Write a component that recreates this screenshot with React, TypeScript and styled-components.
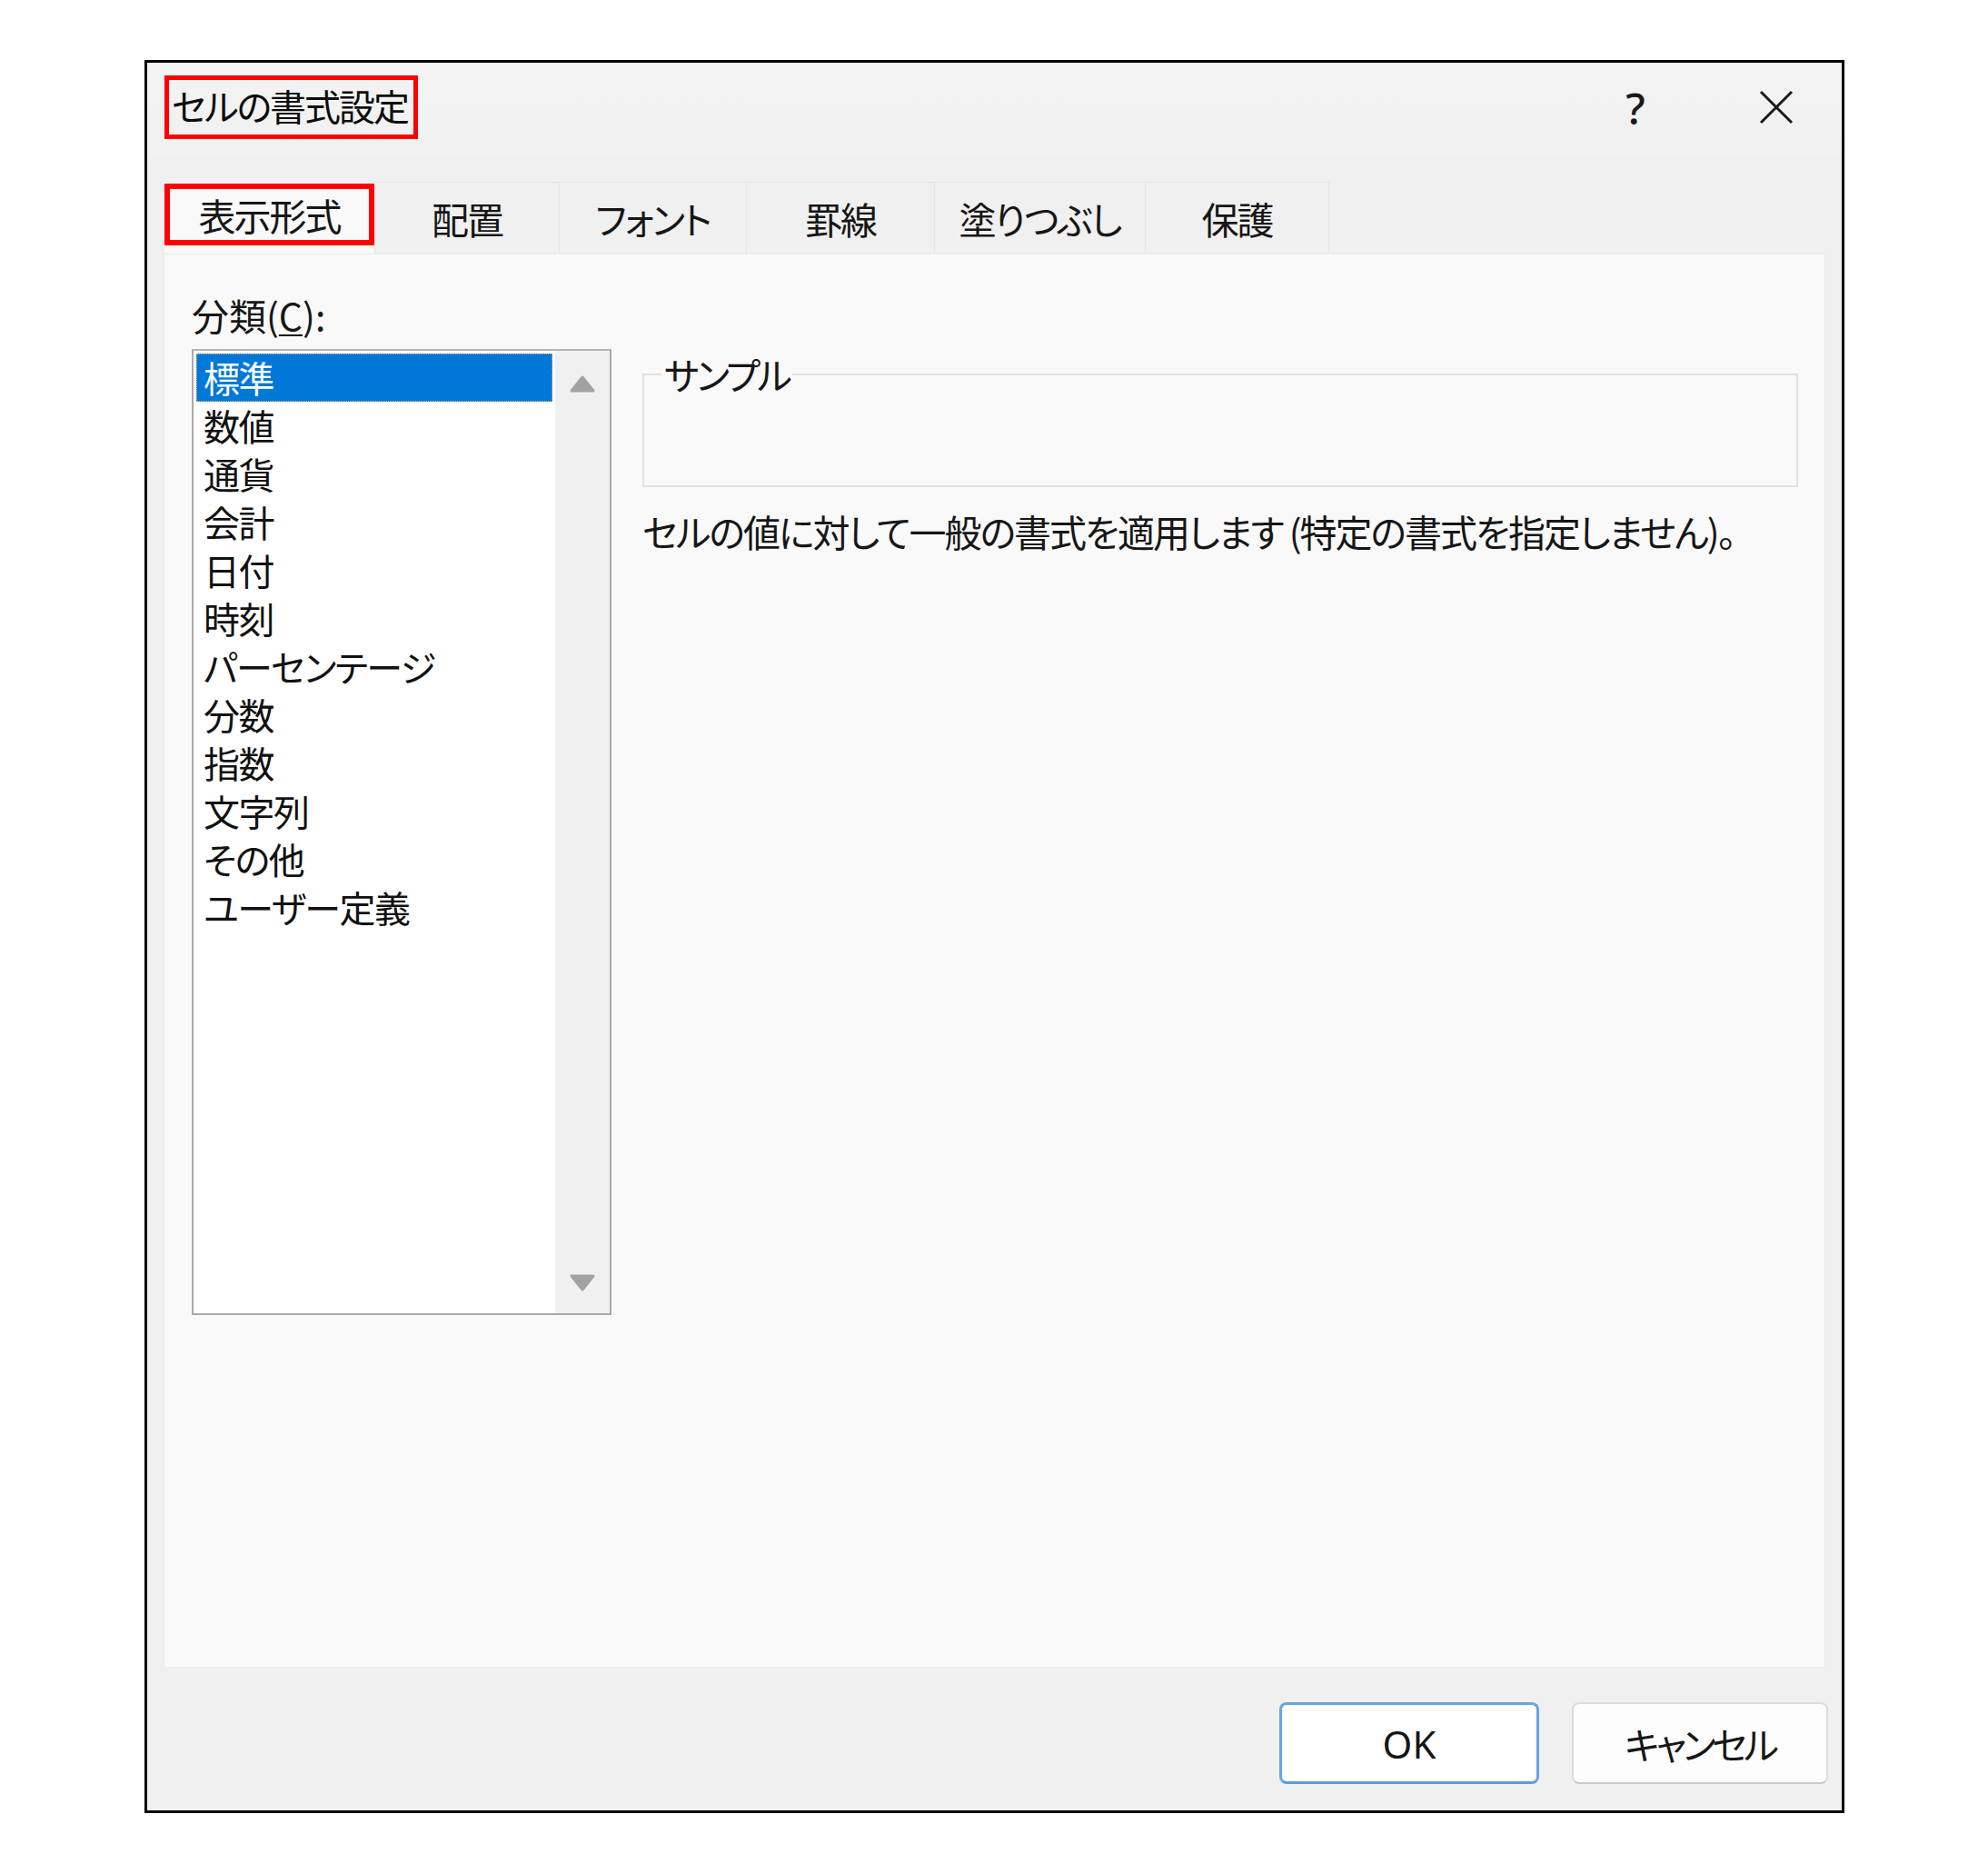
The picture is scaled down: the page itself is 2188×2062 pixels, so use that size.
import React from "react";
import styled, { createGlobalStyle } from "styled-components";

const GlobalStyle = createGlobalStyle`
  html, body { margin: 0; padding: 0; background: #ffffff; }
  body {
    font-family: "Noto Sans CJK JP", "Noto Sans", sans-serif;
    color: #111111;
    font-feature-settings: "palt" 1;
  }
  * { box-sizing: border-box; }
`;

const Page = styled.div`
  width: 2188px;
  height: 2062px;
  padding: 66px 0 0 159px;
`;

const Dialog = styled.div`
  width: 1871px;
  height: 1929px;
  border: 3px solid #000000;
  background: #f0f0f0;
  display: flex;
  flex-direction: column;
`;

const TitleBar = styled.div`
  height: 103px;
  flex: none;
  background: linear-gradient(#f3f3f3, #f1f1f1);
  display: flex;
  align-items: flex-start;
  padding: 14px 22px 0 19px;
`;

const Title = styled.div`
  width: 279px;
  height: 70px;
  border: 5px solid #ff0000;
  padding-left: 3px;
  font-size: 40px;
  letter-spacing: -2px;
  line-height: 56px;
  white-space: nowrap;
  overflow: hidden;
  color: #0d0d0d;
`;

const Controls = styled.div`
  margin-left: auto;
  display: flex;
  gap: 55px;
`;

const ControlButton = styled.div`
  width: 100px;
  height: 70px;
  display: flex;
  align-items: center;
  justify-content: center;
  font-family: "Noto Sans", sans-serif;
  font-size: 48px;
  font-weight: 500;
  color: #1a1a1a;
`;

const TabStrip = styled.div`
  flex: none;
  display: flex;
  padding: 28px 0 0 19px;
`;

const Tab = styled.div<{ $w: number; $active?: boolean }>`
  position: relative;
  width: ${(p) => p.$w}px;
  height: 79px;
  display: flex;
  align-items: center;
  justify-content: center;
  font-size: 41px;
  letter-spacing: -2px;
  color: #161616;
  background: ${(p) => (p.$active ? "#f9f9f9" : "#f0f0f0")};
  border-top: 1px solid ${(p) => (p.$active ? "transparent" : "#e6e6e6")};
  border-right: 1px solid #e6e6e6;
  padding-bottom: ${(p) => (p.$active ? "8px" : "0")};

  ${(p) =>
    p.$active &&
    `
    &::after {
      content: "";
      position: absolute;
      left: 0;
      right: 0;
      top: 1px;
      bottom: 9px;
      border: 6px solid #ff0000;
    }
  `}
`;

const Panel = styled.div`
  flex: none;
  height: 1556px;
  margin: 0 18px;
  background: #f9f9f9;
  border: 1px solid #ececec;
  display: grid;
  grid-template-columns: 462px 1fr;
  column-gap: 34px;
  align-items: start;
  padding: 42px 29px 0 30px;
`;

const LeftColumn = styled.div`
  display: flex;
  flex-direction: column;
`;

const FieldLabel = styled.div`
  font-size: 41px;
  line-height: 49px;
  height: 49px;
  margin-bottom: 13px;
  color: #161616;
  white-space: nowrap;

  u {
    text-decoration-thickness: 2px;
    text-underline-offset: 4px;
  }
`;

const ListBox = styled.div`
  height: 1063px;
  border: 2px solid #a9a9a9;
  border-top-color: #b4b4b4;
  background: #ffffff;
  display: flex;
`;

const ListItems = styled.div`
  flex: 1;
  padding: 3px;
  display: flex;
  flex-direction: column;
`;

const ListItem = styled.div<{ $selected?: boolean }>`
  height: 53px;
  line-height: 51px;
  padding-left: 7px;
  font-size: 40px;
  letter-spacing: -1.5px;
  white-space: nowrap;
  color: ${(p) => (p.$selected ? "#ffffff" : "#111111")};
  background: ${(p) => (p.$selected ? "#0078d7" : "transparent")};
  border: 1px dotted ${(p) => (p.$selected ? "#d9a46a" : "transparent")};
`;

const ScrollBar = styled.div`
  width: 60px;
  background: #f0f0f0;
  display: flex;
  flex-direction: column;
  justify-content: space-between;
  align-items: center;
  padding: 25px 0 22px;
`;

const RightColumn = styled.div`
  display: flex;
  flex-direction: column;
`;

const SampleGroup = styled.fieldset`
  margin: 69px 0 0 0;
  padding: 0 0 0 19px;
  border: 2px solid #e1e1e1;
  min-width: 0;
`;

const SampleLegend = styled.legend`
  padding: 0 3px;
  font-size: 41px;
  letter-spacing: -3px;
  line-height: 41px;
  color: #161616;
`;

const SampleBody = styled.div`
  height: 102px;
`;

const Description = styled.div`
  margin-top: 24px;
  font-size: 41px;
  letter-spacing: -2px;
  line-height: 49px;
  white-space: nowrap;
  color: #161616;
`;

const Footer = styled.div`
  flex: 1;
  display: flex;
  justify-content: flex-end;
  align-items: flex-start;
  gap: 36px;
  padding: 38px 15px 0 0;
`;

const Button = styled.button<{ $w: number; $primary?: boolean }>`
  width: ${(p) => p.$w}px;
  height: 90px;
  border-radius: 8px;
  background: ${(p) => (p.$primary ? "#ffffff" : "#fdfdfd")};
  border: ${(p) => (p.$primary ? "3px solid #6aa5dd" : "2px solid #dcdcdc")};
  border-bottom-color: ${(p) => (p.$primary ? "#5d9bd6" : "#cacaca")};
  font-family: ${(p) =>
    p.$primary ? '"Noto Sans", sans-serif' : '"Noto Sans CJK JP", sans-serif'};
  font-feature-settings: "palt" 1;
  font-size: ${(p) => (p.$primary ? "42px" : "41px")};
  letter-spacing: ${(p) => (p.$primary ? "0" : "-4px")};
  color: #161616;
  padding: 0;
  display: flex;
  align-items: center;
  justify-content: center;
`;

const ArrowUp = () => (
  <svg width="30" height="22" viewBox="0 0 30 22">
    <polygon
      points="3,19 15,4 27,19"
      fill="#a2a2a2"
      stroke="#a2a2a2"
      strokeWidth="3"
      strokeLinejoin="round"
    />
  </svg>
);

const ArrowDown = () => (
  <svg width="30" height="22" viewBox="0 0 30 22">
    <polygon
      points="3,3 27,3 15,18"
      fill="#a2a2a2"
      stroke="#a2a2a2"
      strokeWidth="3"
      strokeLinejoin="round"
    />
  </svg>
);

const CloseIcon = () => (
  <svg width="38" height="38" viewBox="0 0 38 38">
    <path d="M2 2 L36 36 M36 2 L2 36" stroke="#1a1a1a" strokeWidth="3" fill="none" />
  </svg>
);

const tabs = [
  { label: "表示形式", w: 232 },
  { label: "配置", w: 203 },
  { label: "フォント", w: 206 },
  { label: "罫線", w: 207 },
  { label: "塗りつぶし", w: 232 },
  { label: "保護", w: 202 },
];

const categories = [
  "標準",
  "数値",
  "通貨",
  "会計",
  "日付",
  "時刻",
  "パーセンテージ",
  "分数",
  "指数",
  "文字列",
  "その他",
  "ユーザー定義",
];

export default function App() {
  return (
    <>
      <GlobalStyle />
      <Page>
        <Dialog>
          <TitleBar>
            <Title>セルの書式設定</Title>
            <Controls>
              <ControlButton>?</ControlButton>
              <ControlButton>
                <CloseIcon />
              </ControlButton>
            </Controls>
          </TitleBar>
          <TabStrip>
            {tabs.map((t, i) => (
              <Tab key={t.label} $w={t.w} $active={i === 0}>
                {t.label}
              </Tab>
            ))}
          </TabStrip>
          <Panel>
            <LeftColumn>
              <FieldLabel>
                分類(<u>C</u>):
              </FieldLabel>
              <ListBox>
                <ListItems>
                  {categories.map((c, i) => (
                    <ListItem key={c} $selected={i === 0}>
                      {c}
                    </ListItem>
                  ))}
                </ListItems>
                <ScrollBar>
                  <ArrowUp />
                  <ArrowDown />
                </ScrollBar>
              </ListBox>
            </LeftColumn>
            <RightColumn>
              <SampleGroup>
                <SampleLegend>サンプル</SampleLegend>
                <SampleBody />
              </SampleGroup>
              <Description>
                セルの値に対して一般の書式を適用します (特定の書式を指定しません)。
              </Description>
            </RightColumn>
          </Panel>
          <Footer>
            <Button $w={286} $primary>
              OK
            </Button>
            <Button $w={282}>キャンセル</Button>
          </Footer>
        </Dialog>
      </Page>
    </>
  );
}
